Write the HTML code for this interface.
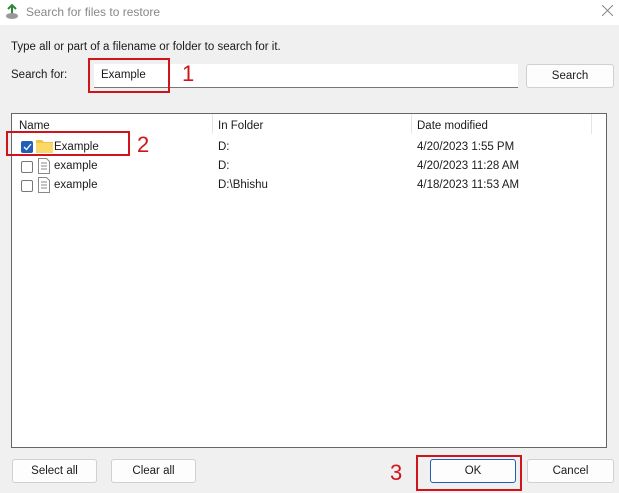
<!DOCTYPE html><html><head><style>
body{margin:0;width:619px;height:493px;background:#f0f0f0;font-family:"Liberation Sans",sans-serif;font-size:11.5px;color:#1a1a1a;position:relative;overflow:hidden}
.a{position:absolute}
.btn{position:absolute;background:#fdfdfd;border:1px solid #d0d0d0;border-radius:3px;text-align:center;line-height:22px;box-sizing:border-box;height:24px}
.red{position:absolute;border:2px solid #d0141c;box-sizing:border-box}
.rn{position:absolute;color:#d0141c;font-size:22px}
.cb{position:absolute;width:12px;height:12px;border:1px solid #777;border-radius:2px;box-sizing:border-box;background:#fff}
</style></head><body>
<div class="a" style="left:0;top:0;width:619px;height:25px;background:#fff"></div>
<svg class="a" style="left:5px;top:4px" width="14" height="16"><path d="M7 1v9" stroke="#2a8a3a" stroke-width="2"/><ellipse cx="7" cy="12" rx="6" ry="3" fill="#999"/><path d="M3 5l4-4 4 4" fill="none" stroke="#2a8a3a" stroke-width="2"/></svg>
<div class="a" style="left:26px;top:5px;color:#888;font-size:12px">Search for files to restore</div>
<svg class="a" style="left:602px;top:5px" width="11" height="11"><path d="M0 0L11 11M11 0L0 11" stroke="#888" stroke-width="1"/></svg>
<div class="a" style="left:11px;top:41px">Type all or part of a filename or folder to search for it.</div>
<div class="a" style="left:11px;top:69px">Search for:</div>
<div class="a" style="left:94px;top:64px;width:424px;height:24px;background:#fff;border-bottom:1px solid #777;box-sizing:border-box"></div>
<div class="a" style="left:101px;top:69px">Example</div>
<div class="red" style="left:88px;top:58px;width:82px;height:35px"></div>
<div class="rn" style="left:182px;top:61px">1</div>
<div class="btn" style="left:526px;top:64px;width:88px">Search</div>
<div class="a" style="left:11px;top:113px;width:596px;height:335px;background:#fff;border:1px solid #666;box-sizing:border-box"></div>
<div class="a" style="left:212px;top:114px;width:1px;height:20px;background:#e5e5e5"></div>
<div class="a" style="left:411px;top:114px;width:1px;height:20px;background:#e5e5e5"></div>
<div class="a" style="left:591px;top:114px;width:1px;height:20px;background:#e5e5e5"></div>
<div class="a" style="left:19px;top:120px">Name</div>
<div class="a" style="left:218px;top:120px">In Folder</div>
<div class="a" style="left:417px;top:120px">Date modified</div>
<div class="cb" style="left:21px;top:141px;background:#1f5fb8;border-color:#1f5fb8"></div>
<svg class="a" style="left:23px;top:143px" width="9" height="8"><path d="M1 4l2.5 2.5L8 1" stroke="#fff" fill="none" stroke-width="1.3"/></svg>
<svg class="a" style="left:36px;top:139px" width="17" height="14"><path d="M0 1h6l2 2h9v11H0z" fill="#f3c44a"/><path d="M0 4h17v10H0z" fill="#fbd867"/></svg>
<div class="a" style="left:54px;top:141px">Example</div>
<div class="cb" style="left:21px;top:161px"></div>
<div class="cb" style="left:21px;top:180px"></div>
<svg class="a" style="left:38px;top:158px" width="12" height="16"><path d="M.5.5h8l3 3v12H.5z M3 5h6M3 8h6M3 11h6" fill="#fff" stroke="#888"/></svg>
<svg class="a" style="left:38px;top:177px" width="12" height="16"><path d="M.5.5h8l3 3v12H.5z M3 5h6M3 8h6M3 11h6" fill="#fff" stroke="#888"/></svg>
<div class="a" style="left:54px;top:160px">example</div>
<div class="a" style="left:54px;top:179px">example</div>
<div class="a" style="left:218px;top:141px">D:</div>
<div class="a" style="left:218px;top:160px">D:</div>
<div class="a" style="left:218px;top:179px">D:\Bhishu</div>
<div class="a" style="left:417px;top:141px">4/20/2023 1:55 PM</div>
<div class="a" style="left:417px;top:160px">4/20/2023 11:28 AM</div>
<div class="a" style="left:417px;top:179px">4/18/2023 11:53 AM</div>
<div class="red" style="left:6px;top:131px;width:124px;height:25px"></div>
<div class="rn" style="left:137px;top:132px">2</div>
<div class="btn" style="left:12px;top:459px;width:85px">Select all</div>
<div class="btn" style="left:111px;top:459px;width:85px">Clear all</div>
<div class="rn" style="left:390px;top:460px">3</div>
<div class="red" style="left:416px;top:455px;width:106px;height:36px"></div>
<div class="btn" style="left:430px;top:459px;width:86px;border:1px solid #1f5fb8">OK</div>
<div class="btn" style="left:527px;top:459px;width:87px">Cancel</div>
</body></html>
